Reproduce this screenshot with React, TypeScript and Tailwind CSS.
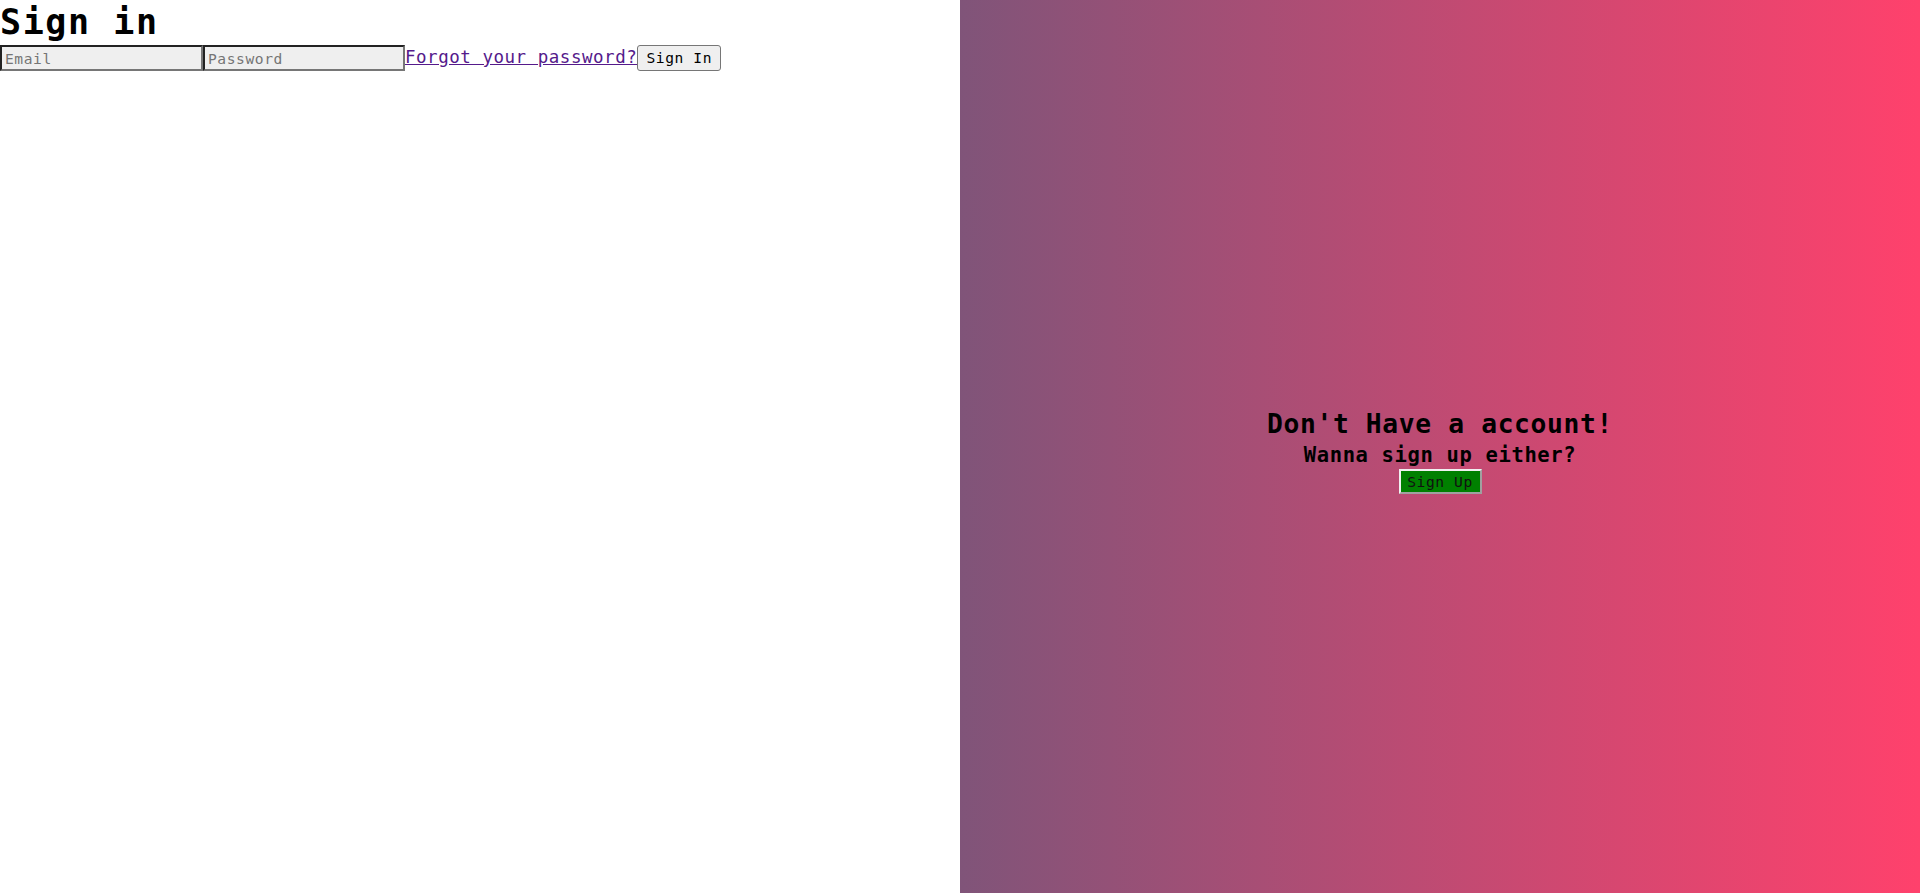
import React from "react";

const mono = "font-['DejaVu_Sans_Mono','Liberation_Mono',monospace] tracking-[0.04em]";

export default function App() {
  return (
    <div className={`flex h-[893px] w-full ${mono}`}>
      <div className="flex w-1/2 flex-col bg-white">
        <h1 className="m-0 text-[35px] font-bold leading-[45px] tracking-[0.045em] text-black">Sign in</h1>
        <form className="flex items-start" onSubmit={(e) => e.preventDefault()}>
          <input
            type="email"
            placeholder="Email"
            className={`h-[26px] w-[203px] border-[2px] border-t-[#222] border-l-[#222] border-b-[#767676] border-r-[#767676] bg-[#efefef] px-[3px] text-[14.6px] text-black placeholder:text-[#757575] outline-none ${mono}`}
          />
          <input
            type="password"
            placeholder="Password"
            className={`h-[26px] w-[202px] border-[2px] border-t-[#222] border-l-[#222] border-b-[#767676] border-r-[#767676] bg-[#efefef] px-[3px] text-[14.6px] text-black placeholder:text-[#757575] outline-none ${mono}`}
          />
          <a href="#" className="text-[17.5px] leading-[24px] tracking-[0.03em] text-[#551a8b] underline">
            Forgot your password?
          </a>
          <button
            type="submit"
            className={`h-[26px] w-[84px] rounded-[3px] border border-[#767676] bg-[#efefef] text-[14.6px] text-black ${mono}`}
          >
            Sign In
          </button>
        </form>
      </div>
      <div className="flex w-1/2 flex-col items-center justify-center bg-[linear-gradient(to_right,#805479,#ff416c)] pt-[7px] text-black">
        <h2 className="m-0 text-[26.3px] font-bold leading-[36px]">Don't Have a account!</h2>
        <h3 className="m-0 text-[20.5px] font-bold leading-[27px]">Wanna sign up either?</h3>
        <button
          className={`h-[25px] w-[83px] border-[2px] border-t-[#f0f0f0] border-l-[#f0f0f0] border-b-[#a0a0a0] border-r-[#a0a0a0] bg-[#008000] text-[14.6px] text-[#111] ${mono}`}
        >
          Sign Up
        </button>
      </div>
    </div>
  );
}
